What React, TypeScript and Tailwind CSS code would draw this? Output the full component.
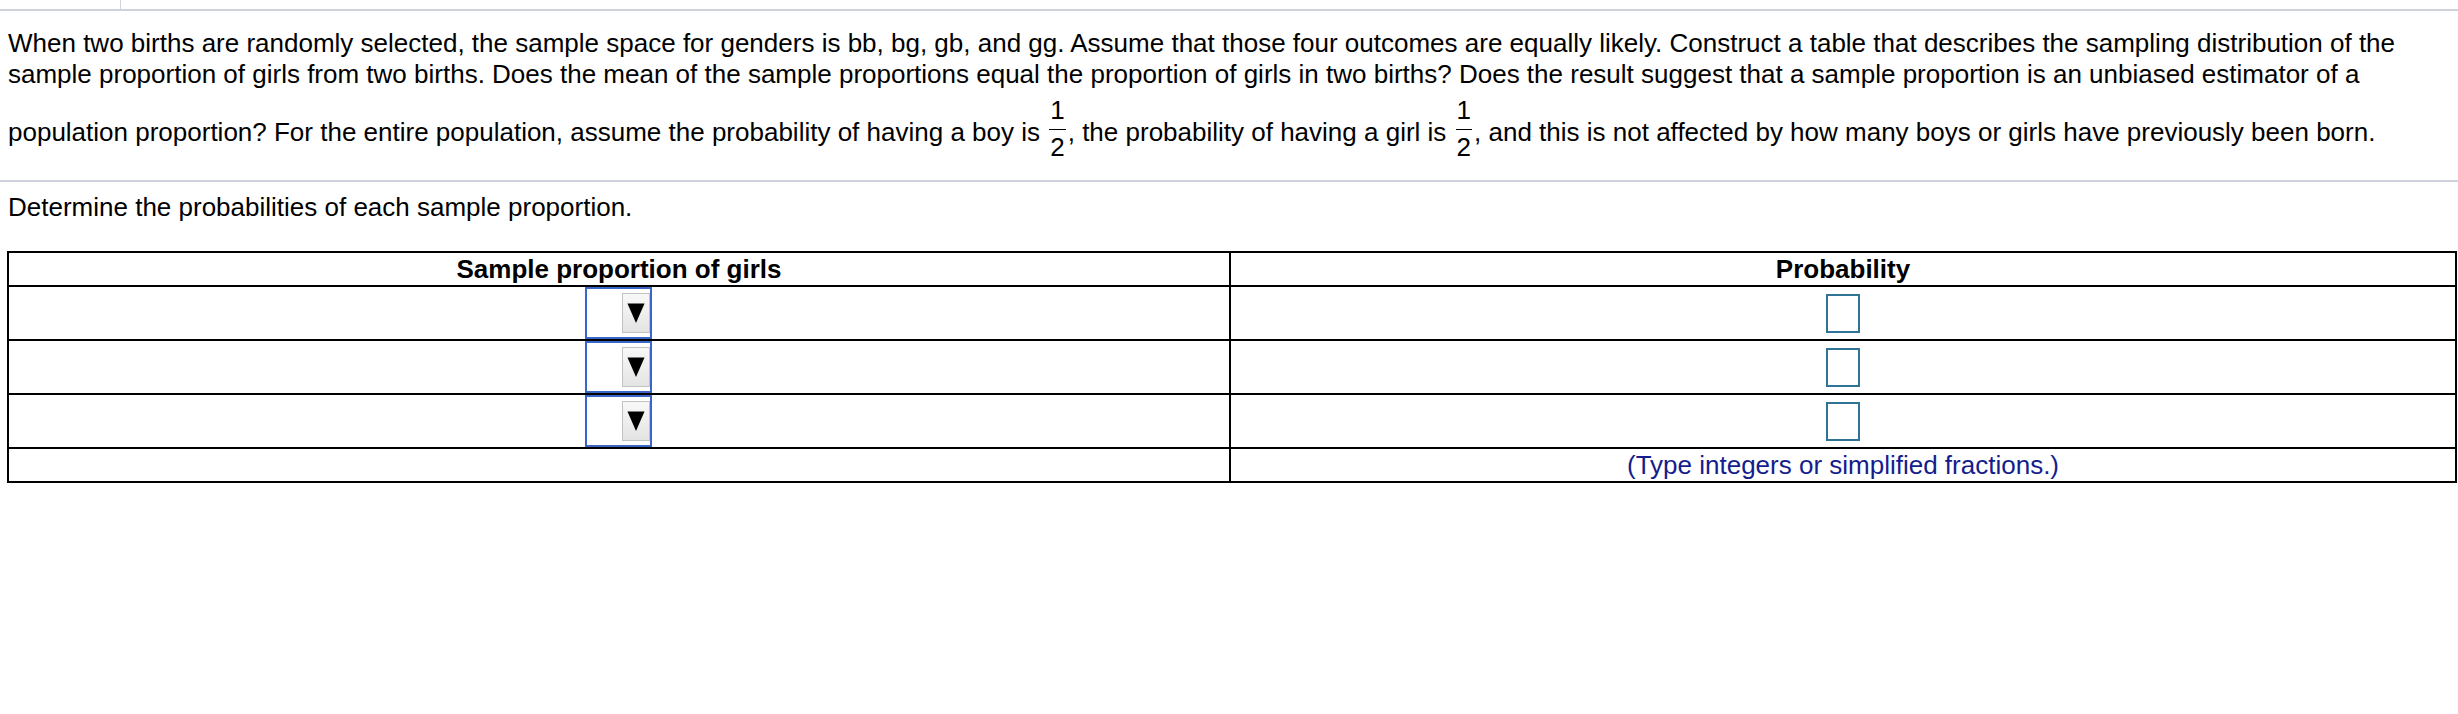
import React from "react";

function Frac() {
  return (
    <span className="inline-flex flex-col items-center align-middle ml-[2px] mr-[2px] mt-[5px] mb-[16px]">
      <span className="leading-[30px] px-[1px] pb-[4px]">1</span>
      <span className="h-[1px] w-full bg-black" />
      <span className="leading-[30px] px-[1px] pt-[2px] pb-[1px]">2</span>
    </span>
  );
}

function SelectBox() {
  return (
    <div className="w-[67px] h-[52px] border-2 border-[#3a66c8] flex items-center justify-end mr-[2px]">
      <div className="w-[28px] h-[40px] border border-[#c2c2c2] bg-gradient-to-b from-[#f8f8f8] to-[#e4e4e4] flex items-center justify-center">
        <svg width="18" height="22" viewBox="0 0 18 22">
          <polygon points="0.5,1.5 17.5,1.5 9,21" fill="#000" />
        </svg>
      </div>
    </div>
  );
}

function InputBox() {
  return <div className="w-[34px] h-[39px] border-2 border-[#2f7396]" />;
}

export default function App() {
  return (
    <div className="w-[2458px] h-[714px] bg-white text-black font-['Liberation_Sans',Arial,sans-serif] text-[26px]">
      <div className="h-[9px] flex">
        <div className="w-[121px] border-r border-[#d3d5dc]" />
      </div>
      <div className="h-[2px] bg-[#cfd2dc]" />
      <div className="px-[8px] pt-[17px] leading-[31px]">
        When two births are randomly selected, the sample space for genders is bb, bg, gb, and gg. Assume that those four outcomes are equally likely. Construct a table that describes the sampling distribution of the sample proportion of girls from two births. Does the mean of the sample proportions equal the proportion of girls in two births? Does the result suggest that a sample proportion is an unbiased estimator of a population proportion? For the entire population, assume the probability of having a boy is{" "}
        <Frac />, the probability of having a girl is{" "}
        <Frac />, and this is not affected by how many boys or girls have previously been born.
      </div>
      <div className="h-[2px] bg-[#cfd2dc] mt-[1px]" />
      <div className="px-[8px] pt-[10px] leading-[31px]">Determine the probabilities of each sample proportion.</div>
      <div className="ml-[7px] mt-[28px] w-[2450px] border-2 border-black leading-none">
        <div className="grid grid-cols-[1220px_1fr] h-[34px] border-b-2 border-black font-bold">
          <div className="flex items-center justify-center">Sample proportion of girls</div>
          <div className="flex items-center justify-center border-l-2 border-black">Probability</div>
        </div>
        {[0, 1, 2].map((i) => (
          <div key={i} className="grid grid-cols-[1220px_1fr] h-[54px] border-b-2 border-black">
            <div className="flex items-center justify-center">
              <SelectBox />
            </div>
            <div className="flex items-center justify-center border-l-2 border-black">
              <InputBox />
            </div>
          </div>
        ))}
        <div className="grid grid-cols-[1220px_1fr] h-[32px]">
          <div />
          <div className="flex items-center justify-center border-l-2 border-black text-[#141d8c]">
            (Type integers or simplified fractions.)
          </div>
        </div>
      </div>
    </div>
  );
}
